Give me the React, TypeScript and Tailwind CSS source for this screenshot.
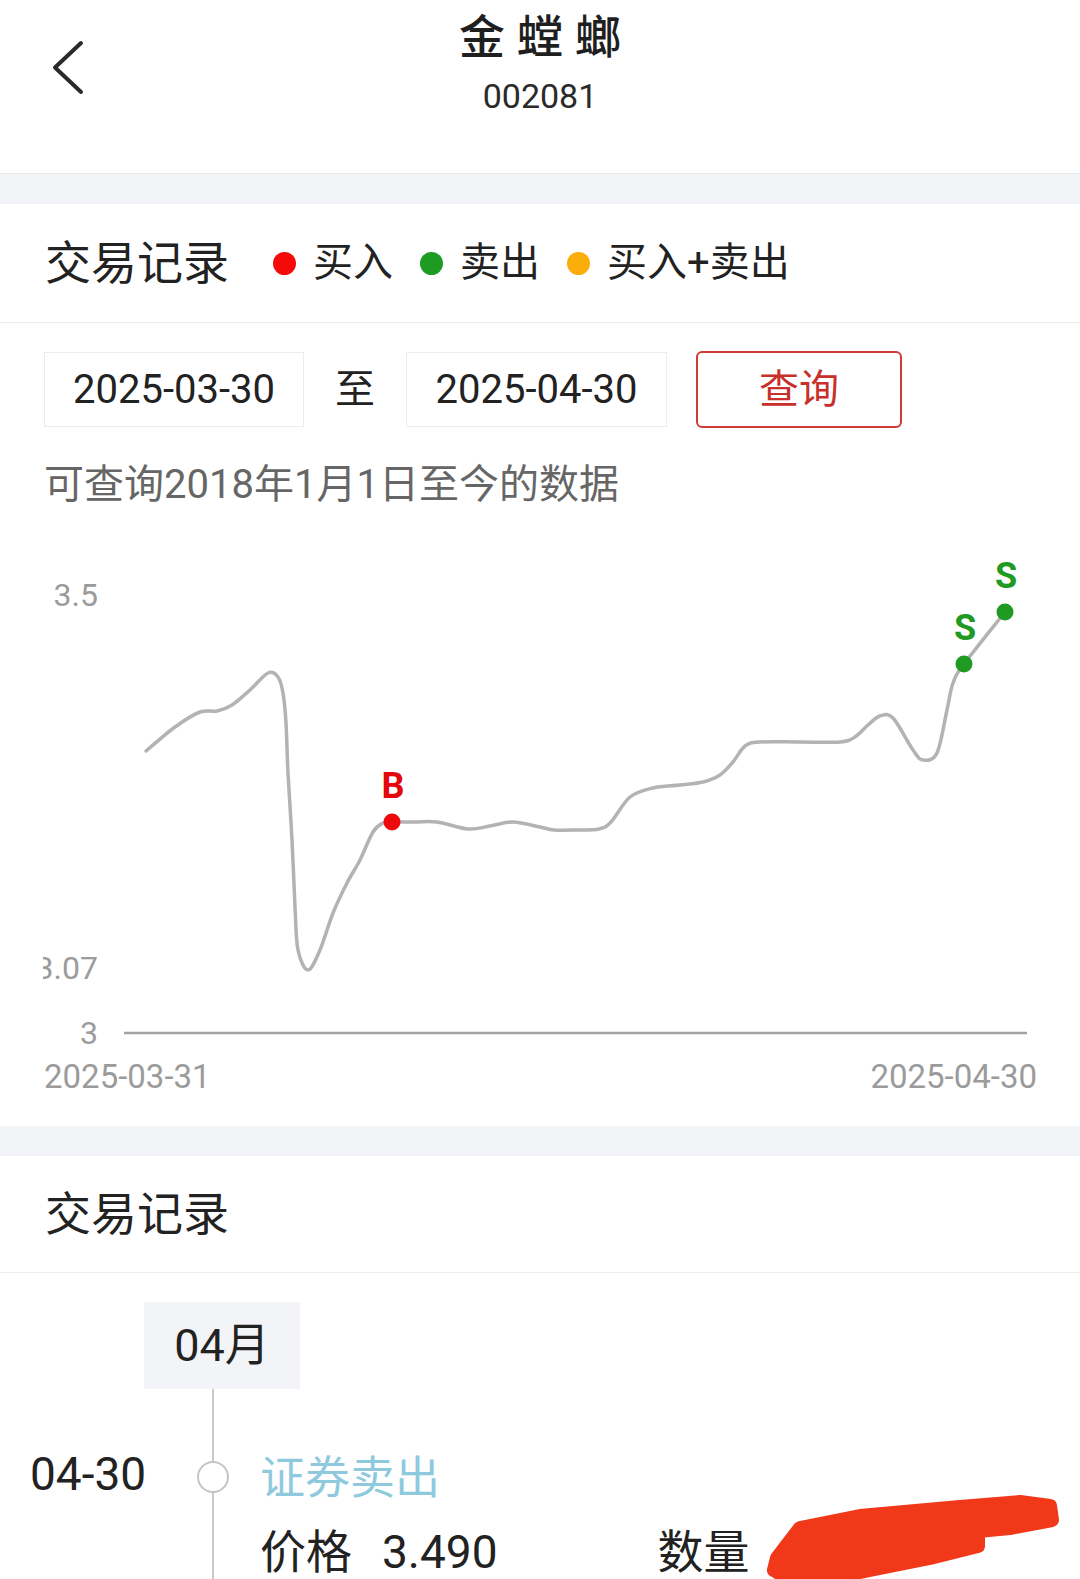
import React from 'react';

const FONT = 'Roboto, "Noto Sans CJK SC", "Noto Sans", sans-serif';

type P = [number, number];

const pricePts: P[] = [
  [146, 751], [175, 727], [200, 712], [217, 711], [232, 705], [250, 690], [268, 673],
  [278, 677], [283, 693], [286, 723], [288, 773], [292, 840], [295, 907], [298, 950],
  [308, 970], [320, 950], [333, 913], [347, 883], [360, 860], [373, 832], [383, 823],
  [392, 822], [415, 822], [437, 822], [468, 829], [490, 826], [513, 822], [540, 827],
  [554, 830], [577, 830], [599, 829], [611, 822], [630, 797], [653, 788], [680, 785],
  [703, 782], [720, 775], [733, 762], [745, 746], [760, 742], [800, 742], [840, 742],
  [855, 737], [868, 725], [880, 716], [893, 718], [913, 750], [923, 760], [937, 753],
  [947, 710], [953, 683], [964, 664], [1005, 612],
];

// catmull-rom -> cubic bezier
function smoothPath(pts: P[]) {
  let d = `M${pts[0][0]},${pts[0][1]}`;
  for (let i = 0; i < pts.length - 1; i++) {
    const p0 = pts[i - 1] || pts[i];
    const p1 = pts[i];
    const p2 = pts[i + 1];
    const p3 = pts[i + 2] || p2;
    const c1x = p1[0] + (p2[0] - p0[0]) / 6;
    const c1y = p1[1] + (p2[1] - p0[1]) / 6;
    const c2x = p2[0] - (p3[0] - p1[0]) / 6;
    const c2y = p2[1] - (p3[1] - p1[1]) / 6;
    d += ` C${c1x},${c1y} ${c2x},${c2y} ${p2[0]},${p2[1]}`;
  }
  return d;
}

function Header() {
  return (
    <div className="relative h-[174px] border-b border-[#e9e9ec] bg-white">
      <svg className="absolute left-[50px] top-[38px]" width="40" height="60" viewBox="50 38 40 60">
        <polyline points="81,43 55,67.5 81,92" fill="none" stroke="#2a2a2a" strokeWidth="4" strokeLinecap="round" strokeLinejoin="round" />
      </svg>
      <div className="flex flex-col items-center pt-[10px]">
        <div className="pl-[12px] text-[46px] font-medium leading-[55px] tracking-[12px] text-[#1f1f1f]">金螳螂</div>
        <div className="mt-[11px] text-[34px] leading-[40px] text-[#2a2a2a]">002081</div>
      </div>
    </div>
  );
}

function Legend({ color, label }: { color: string; label: string }) {
  return (
    <div className="flex items-center">
      <span className={`h-[23px] w-[23px] rounded-full ${color}`} />
      <span className="ml-[17px] text-[40px] leading-[48px] text-[#222]">{label}</span>
    </div>
  );
}

function Chart() {
  return (
    <svg width="1080" height="617" viewBox="0 509 1080 617" className="block">
      <defs>
        <clipPath id="yl">
          <rect x="43" y="509" width="1037" height="617" />
        </clipPath>
      </defs>
      <g fill="#9b9b9b" fontSize="32" style={{ fontFamily: FONT }} textAnchor="end" clipPath="url(#yl)">
        <text x="98" y="606">3.5</text>
        <text x="98" y="979">3.07</text>
        <text x="98" y="1044">3</text>
      </g>
      <line x1="124" y1="1033" x2="1027" y2="1033" stroke="#a3a3a3" strokeWidth="2.5" />
      <text x="44" y="1088" fill="#9b9b9b" fontSize="33" style={{ fontFamily: FONT }}>2025-03-31</text>
      <text x="1037" y="1088" fill="#9b9b9b" fontSize="33" textAnchor="end" style={{ fontFamily: FONT }}>2025-04-30</text>
      <path d={smoothPath(pricePts)} fill="none" stroke="#b3b3b3" strokeWidth="3.5" strokeLinecap="round" strokeLinejoin="round" />
      <circle cx="392" cy="822" r="8.5" fill="#ee0a0a" />
      <circle cx="964" cy="664" r="8.5" fill="#1f9a22" />
      <circle cx="1005" cy="612" r="8.5" fill="#1f9a22" />
      <g fontSize="36" fontWeight="700" textAnchor="middle" style={{ fontFamily: FONT }}>
        <text x="393" y="798" fill="#e3080b">B</text>
        <text x="965" y="640" fill="#1f9a22">S</text>
        <text x="1006" y="588" fill="#1f9a22">S</text>
      </g>
    </svg>
  );
}

function Scribble() {
  return (
    <svg className="absolute left-[740px] top-[1480px]" width="340" height="99" viewBox="740 1480 340 99">
      <polygon
        points="777,1558 800,1528 860,1516 960,1507 1020,1502 1050,1506 1052,1520 1010,1528 978,1531 978,1546 930,1558 870,1570 820,1580 790,1580 774,1570"
        fill="#f1391a"
        stroke="#f1391a"
        strokeWidth="14"
        strokeLinejoin="round"
      />
    </svg>
  );
}

export default function App() {
  return (
    <div className="relative h-[1579px] w-[1080px] overflow-hidden bg-white text-[#222]" style={{ fontFamily: FONT }}>
      <Header />
      <div className="h-[30px] bg-[#f2f3f7]" />

      {/* chart section */}
      <div className="h-[922px] bg-white">
        <div className="flex h-[119px] items-center border-b border-[#ededed] px-[45px]">
          <span className="text-[46px] leading-[54px] text-[#222]">交易记录</span>
          <div className="ml-[44px] flex items-center gap-[27px]">
            <Legend color="bg-[#f50a0a]" label="买入" />
            <Legend color="bg-[#1e9b22]" label="卖出" />
            <Legend color="bg-[#fbad0c]" label="买入+卖出" />
          </div>
        </div>
        <div className="mt-[28px] flex items-center pl-[44px]">
          <div className="flex h-[75px] w-[260px] items-center justify-center border border-[#ececec] text-[40px] leading-[48px] text-[#222]">2025-03-30</div>
          <div className="flex w-[102px] justify-center text-[40px] leading-[48px] text-[#222]">至</div>
          <div className="flex h-[75px] w-[261px] items-center justify-center border border-[#ececec] text-[40px] leading-[48px] text-[#222]">2025-04-30</div>
          <div className="ml-[29px] flex h-[77px] w-[206px] items-center justify-center rounded-[6px] border-2 border-[#cf3b36] text-[40px] leading-[48px] text-[#c8302c]">查询</div>
        </div>
        <div className="mt-[33px] h-[48px] pl-[44px] text-[40px] leading-[48px] text-[#666]">可查询2018年1月1日至今的数据</div>
        <Chart />
      </div>

      <div className="h-[30px] bg-[#f2f3f7]" />

      {/* records */}
      <div className="flex h-[117px] items-center border-b border-[#ededed] px-[45px]">
        <span className="text-[46px] leading-[54px] text-[#222]">交易记录</span>
      </div>
      <div className="ml-[144px] mt-[29px] flex h-[87px] w-[156px] items-center justify-center bg-[#f3f4f8] text-[45px] leading-[52px] text-[#222]">04月</div>
      <div className="flex items-start">
        <div className="w-[197px] pl-[30px] pt-[58px] text-[46px] leading-[54px] text-[#222]">04-30</div>
        <div className="flex w-[32px] flex-col items-center">
          <div className="h-[72px] w-[2px] bg-[#c9c9c9]" />
          <div className="h-[32px] w-[32px] rounded-full border-2 border-[#c4c4c4] bg-white" />
          <div className="h-[120px] w-[2px] bg-[#c9c9c9]" />
        </div>
        <div className="ml-[31px] pt-[64px]">
          <div className="text-[45px] leading-[52px] text-[#8fc9de]">证券卖出</div>
          <div className="mt-[21px] flex text-[46px] leading-[52px] text-[#222]">
            <span>价格</span>
            <span className="ml-[30px]">3.490</span>
            <span className="ml-[160px]">数量</span>
          </div>
        </div>
      </div>
      <Scribble />
    </div>
  );
}
